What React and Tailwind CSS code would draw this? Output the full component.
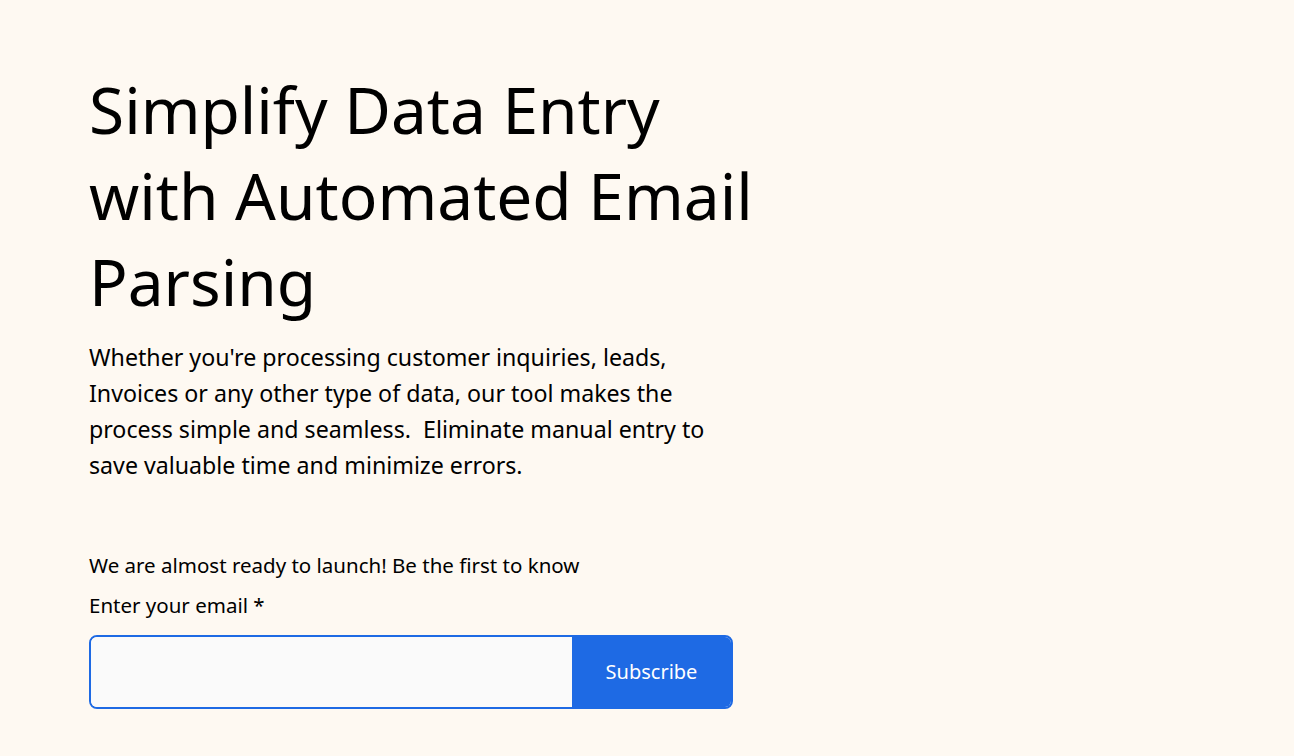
import React from 'react';

/**
 * Launch landing hero
 * Headline, pitch copy and an email signup row
 */
export default function App() {
  return (
    <div
      className="min-h-screen w-full bg-[#fef9f2] text-black"
      style={{ fontFamily: '"Noto Sans", "Open Sans", sans-serif' }}
    >
      <div className="pl-[89px] pt-[67px]">
        <h1 className="whitespace-nowrap text-[64px] leading-[86px] font-normal">
          Simplify Data Entry
          <br />
          with Automated Email
          <br />
          Parsing
        </h1>

        <p className="mt-[14px] whitespace-nowrap text-[23.2px] leading-[36px]">
          Whether you're processing customer inquiries, leads,
          <br />
          Invoices or any other type of data, our tool makes the
          <br />
          process simple and seamless.&nbsp; Eliminate manual entry to
          <br />
          save valuable time and minimize errors.
        </p>

        <form className="mt-[70px] w-[644px]" onSubmit={(e) => e.preventDefault()}>
          <p className="text-[20.5px] leading-[24px]">We are almost ready to launch! Be the first to know</p>
          <label htmlFor="email" className="block mt-[16px] text-[20.5px] leading-[24px]">
            Enter your email *
          </label>
          <div className="mt-[18px] flex h-[74px] rounded-[8px] border-2 border-[#1e6ae4] overflow-hidden">
            <input
              id="email"
              type="email"
              className="flex-1 min-w-0 bg-[#fafafa] px-4 text-[20px] outline-none"
            />
            <button
              type="submit"
              className="w-[159px] bg-[#1e6ae4] text-white text-[20px]"
            >
              Subscribe
            </button>
          </div>
        </form>
      </div>
    </div>
  );
}
